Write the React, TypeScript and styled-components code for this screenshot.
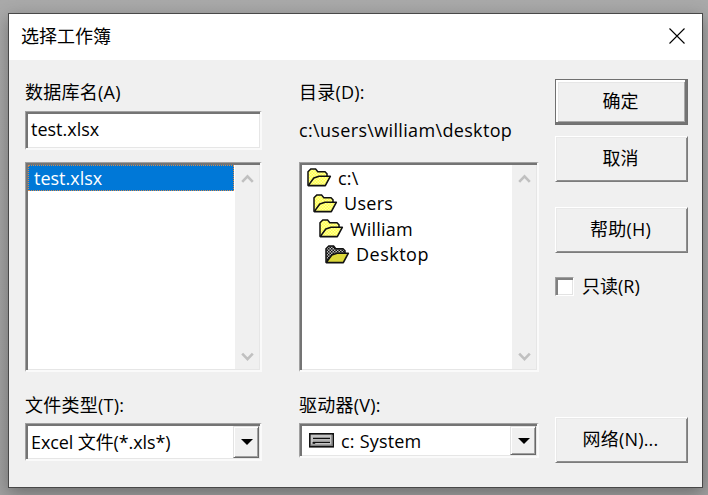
import React from "react";
import styled, { createGlobalStyle } from "styled-components";

const Global = createGlobalStyle`
  * { box-sizing: border-box; }
  html, body, #root { height: 100%; }
  body {
    margin: 0;
    overflow: hidden;
    background: #a8a8a8;
    color: #000;
    font-family: "Open Sans", "Noto Sans CJK SC", sans-serif;
    font-size: 18px;
  }
`;

const Desktop = styled.div`
  height: 495px;
  padding: 13px 5px 7px 8px;
  background: linear-gradient(#a9a9a9, #a0a0a0);
`;

const Dialog = styled.main`
  height: 475px;
  border: 1px solid #484848;
  background: #f0f0f0;
  box-shadow: 0 5px 16px rgba(0, 0, 0, 0.32);
`;

const TitleBar = styled.header`
  height: 46px;
  padding: 0 17px 2px 12px;
  display: flex;
  align-items: center;
  justify-content: space-between;
  background: #fff;
`;

const Body = styled.div`
  display: flex;
  padding: 19px 0 0 16px;
`;

const Column = styled.section<{ $w: number; $gap: number }>`
  width: ${(p) => p.$w}px;
  margin-right: ${(p) => p.$gap}px;
  display: flex;
  flex-direction: column;
`;

const Text = styled.span<{ $ls?: number; $up?: number }>`
  white-space: pre;
  line-height: 26px;
  letter-spacing: ${(p) => p.$ls ?? 0}px;
  margin-bottom: ${(p) => p.$up ?? 0}px;
`;

const Label = styled.label<{ $h: number }>`
  height: ${(p) => p.$h}px;
  line-height: 26px;
  display: flex;
  align-items: flex-start;
`;

const Sunken = styled.div<{ $h: number; $mb?: number }>`
  height: ${(p) => p.$h}px;
  margin-bottom: ${(p) => p.$mb ?? 0}px;
  flex: none;
  display: flex;
  background: #fff;
  border: 1px solid;
  border-width: 1px 2px 2px 1px;
  border-color: #a0a0a0 #fafafa #fafafa #a0a0a0;
  box-shadow: inset 2px 2px 0 #747474, inset -1px -1px 0 #e6e6e6;
  padding: 2px 1px 1px 2px;
`;

const Field = styled.div<{ $pad: number }>`
  flex: 1;
  display: flex;
  align-items: center;
  gap: 7px;
  padding-left: ${(p) => p.$pad}px;
`;

const List = styled.div`
  flex: 1;
  min-width: 0;
`;

const Selected = styled.div`
  height: 26px;
  margin-right: 1px;
  padding-left: 5px;
  display: flex;
  align-items: center;
  color: #fff;
  background: #0078d7;
  border: 1px dotted #d58a4c;
`;

const TreeRow = styled.div<{ $depth: number }>`
  height: 25.5px;
  padding-left: ${(p) => 5 + p.$depth * 6}px;
  display: flex;
  align-items: center;
  gap: 6px;
`;

const ScrollBar = styled.div`
  width: 24px;
  padding: 8px 0 7px 6px;
  background: #f0f0f0;
  display: flex;
  flex-direction: column;
  justify-content: space-between;
`;

const DropButton = styled.button`
  width: 26px;
  padding: 0 0 0 1px;
  display: flex;
  align-items: center;
  justify-content: center;
  background: #f0f0f0;
  border: 1px solid;
  border-color: #e3e3e3 #696969 #696969 #e3e3e3;
  box-shadow: inset 1px 1px 0 #fff, inset -1px -1px 0 #a0a0a0;
`;

const PushButton = styled.button<{ $default?: boolean; $mb?: number }>`
  width: 133px;
  height: 46px;
  flex: none;
  margin: 0 0 ${(p) => p.$mb ?? 0}px;
  padding: 0 2px 2px 0;
  display: flex;
  align-items: center;
  justify-content: center;
  font: inherit;
  color: #000;
  background: #f0f0f0;
  border: 1px solid;
  border-color: ${(p) =>
    p.$default ? "#707070" : "#fff #7c7c7c #7c7c7c #fff"};
  box-shadow: ${(p) =>
    p.$default
      ? "inset -2px -2px 0 #747474, inset 2px 2px 0 #fff, inset -3px -3px 0 #a8a8a8, inset 3px 3px 0 #e6e6e6"
      : "inset 1px 1px 0 #e9e9e9, inset -1px -1px 0 #8e8e8e"};
`;

const CheckRow = styled.label`
  height: 26px;
  margin-bottom: 118px;
  display: flex;
  align-items: center;
  gap: 8px;
`;

const CheckBox = styled.span`
  width: 19px;
  height: 19px;
  background: #fff;
  border: 1px solid;
  border-color: #a0a0a0 #fff #fff #a0a0a0;
  box-shadow: inset 2px 2px 0 #808080, inset -1px -1px 0 #e3e3e3;
`;

const Chevron = ({ down = false }: { down?: boolean }) => (
  <svg width="13" height="11" viewBox="0 0 13 11">
    <path
      d={down ? "M1.2 2.7L6.5 8.2L11.8 2.7" : "M1.2 8.8L6.5 3.3L11.8 8.8"}
      fill="none"
      stroke="#c0c0c0"
      strokeWidth="2.6"
    />
  </svg>
);

const Scroll = () => (
  <ScrollBar>
    <Chevron />
    <Chevron down />
  </ScrollBar>
);

const Arrow = () => (
  <svg width="12" height="6" viewBox="0 0 12 6">
    <path d="M0 0H12L6 6Z" fill="#000" />
  </svg>
);

const Folder = ({ current = false }: { current?: boolean }) => (
  <svg width="25" height="19" viewBox="0 0 25 19">
    <defs>
      <pattern id="yellow" width="3" height="3" patternUnits="userSpaceOnUse">
        <rect width="3" height="3" fill="#ffff48" />
        <path d="M0 0H1.5V1.5H0ZM1.5 1.5H3V3H1.5Z" fill="#ffffa0" />
      </pattern>
      <pattern id="hatch" width="3" height="3" patternUnits="userSpaceOnUse">
        <rect width="3" height="3" fill="#b8b8b8" />
        <path d="M0 0H1.5V1.5H0ZM1.5 1.5H3V3H1.5Z" fill="#111" />
      </pattern>
    </defs>
    <path
      d="M1 17.5V3.8L3.8 1H8.6L10.8 3.8H18L20 5.8V8.3"
      fill={current ? "url(#hatch)" : "url(#yellow)"}
    />
    <path
      d="M1 17.5V3.8L3.8 1H8.6L10.8 3.8H18L20 5.8V8.3"
      fill="none"
      stroke="#111"
      strokeWidth="1.5"
    />
    <path
      d="M1.2 17.6L6.8 10L12 8.3H23.3L18.3 17.6Z"
      fill={current ? "#dcd83c" : "url(#yellow)"}
      stroke="#111"
      strokeWidth="1.6"
      strokeLinejoin="round"
    />
  </svg>
);

const Drive = () => (
  <svg width="25" height="15" viewBox="0 0 25 15">
    <rect x="0.8" y="0.8" width="23.4" height="13" fill="#c4c4c4" stroke="#111" strokeWidth="1.6" />
    <path d="M2 12.2H23V2" fill="none" stroke="#808080" strokeWidth="1.4" />
    <path d="M4 5.4H21M4 9.4H21" stroke="#111" strokeWidth="1.4" />
    <path d="M4 7.2H21" stroke="#aaa" strokeWidth="1.2" />
    <rect x="3.6" y="9" width="2.6" height="1.8" fill="#111" />
  </svg>
);

const Close = () => (
  <svg width="16" height="16" viewBox="0 0 16 16">
    <path d="M0.5 0.5L15.5 15.5M15.5 0.5L0.5 15.5" stroke="#000" strokeWidth="1.1" />
  </svg>
);

const tree: { name: string; ls: number }[] = [
  { name: "c:\\", ls: 0.2 },
  { name: "Users", ls: 0.3 },
  { name: "William", ls: 0.2 },
  { name: "Desktop", ls: 0.5 },
];

export default function App() {
  return (
    <>
      <Global />
      <Desktop>
        <Dialog>
          <TitleBar>
            <Text>选择工作簿</Text>
            <Close />
          </TitleBar>
          <Body>
            <Column $w={237} $gap={37}>
              <Label $h={32}>
                <Text $ls={0.25}>数据库名(A)</Text>
              </Label>
              <Sunken $h={39} $mb={12}>
                <Field $pad={3}>
                  <Text $up={3}>test.xlsx</Text>
                </Field>
              </Sunken>
              <Sunken $h={210} $mb={20}>
                <List>
                  <Selected>
                    <Text>test.xlsx</Text>
                  </Selected>
                </List>
                <Scroll />
              </Sunken>
              <Label $h={31}>
                <Text $ls={0.25}>文件类型(T):</Text>
              </Label>
              <Sunken $h={38}>
                <Field $pad={3}>
                  <Text $ls={-0.1}>Excel 文件(*.xls*)</Text>
                </Field>
                <DropButton>
                  <Arrow />
                </DropButton>
              </Sunken>
            </Column>
            <Column $w={240} $gap={16}>
              <Label $h={38}>
                <Text $ls={0.2}>目录(D):</Text>
              </Label>
              <Label $h={45}>
                <Text $ls={0.34}>c:\users\william\desktop</Text>
              </Label>
              <Sunken $h={210} $mb={20}>
                <List>
                  {tree.map((f, i) => (
                    <TreeRow key={f.name} $depth={i}>
                      <Folder current={i === tree.length - 1} />
                      <Text $ls={f.ls}>{f.name}</Text>
                    </TreeRow>
                  ))}
                </List>
                <Scroll />
              </Sunken>
              <Label $h={31}>
                <Text $ls={0.25}>驱动器(V):</Text>
              </Label>
              <Sunken $h={35}>
                <Field $pad={7}>
                  <Drive />
                  <Text $ls={0.2}>c: System</Text>
                </Field>
                <DropButton>
                  <Arrow />
                </DropButton>
              </Sunken>
            </Column>
            <Column $w={133} $gap={0}>
              <PushButton $default $mb={11}>
                <Text>确定</Text>
              </PushButton>
              <PushButton $mb={25}>
                <Text>取消</Text>
              </PushButton>
              <PushButton $mb={20}>
                <Text $ls={0.2}>帮助(H)</Text>
              </PushButton>
              <CheckRow>
                <CheckBox />
                <Text>只读(R)</Text>
              </CheckRow>
              <PushButton>
                <Text $ls={0.2}>网络(N)...</Text>
              </PushButton>
            </Column>
          </Body>
        </Dialog>
      </Desktop>
    </>
  );
}
